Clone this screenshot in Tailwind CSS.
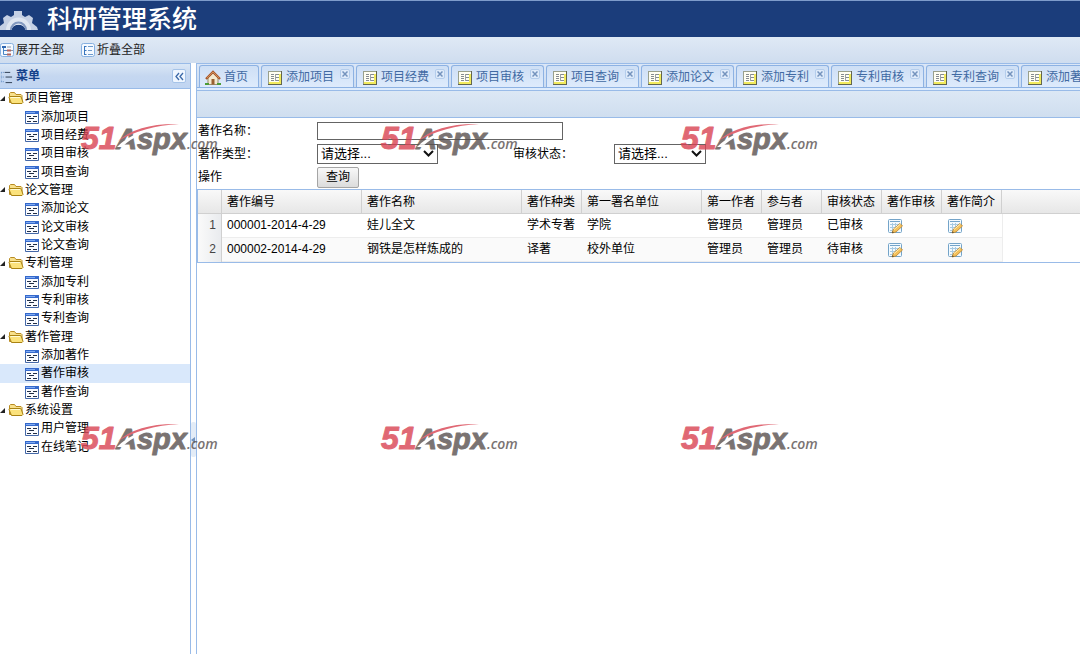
<!DOCTYPE html>
<html lang="zh-CN">
<head>
    <meta charset="UTF-8">
    <meta name="viewport" content="width=device-width, initial-scale=1.0">
    <title>科研管理系统</title>
    <script src="https://cdn.jsdelivr.net/npm/@tailwindcss/browser@4"></script>
</head>
<body class="relative flex h-screen flex-col overflow-hidden bg-white font-['Liberation_Sans','Noto_Sans_CJK_SC',sans-serif] text-[12px] leading-[18px] text-black">
    <!-- Icon sprite -->
    <svg class="hidden">
        <symbol id="i-tree" viewBox="0 0 14 14">
            <rect x=".5" y=".5" width="13" height="13" rx="2" fill="#f4f9ff" stroke="#86b0e0"/>
            <path d="M3.500 5v6.500M3.500 7.500h4M3.500 11.500h4" stroke="#4a86c5" fill="none"/>
            <path d="M2 3h4v2H2z" fill="#2f66b0"/>
            <path d="M7 6.500h4v2H7zM7 10.500h4v2H7z" fill="#b0655f"/>
            <path d="M7 4h4M11 7.500h2" stroke="#8b97a8"/>
        </symbol>
        <symbol id="i-fold" viewBox="0 0 14 14">
            <rect x=".5" y=".5" width="13" height="13" rx="2" fill="#f4f9ff" stroke="#86b0e0"/>
            <path d="M3.500 3v9M3.500 3.500h2M3.500 7.500h2M3.500 11.500h2" stroke="#3b76bd" fill="none"/>
            <path d="M7 3.500h5M7 7.500h4M7 11.500h5" stroke="#6e9bcc"/>
        </symbol>
        <symbol id="i-list" viewBox="0 0 14 14">
            <path d="M1 1.500h3M1 6.500h3M1 11.500h3" stroke="#4f81bd" stroke-dasharray="1 1"/>
            <path d="M1.500 2v10" stroke="#8badd6" stroke-dasharray="1 1"/>
            <path d="M5 1.500h6M6 6.500h7M6 12.500h7" stroke="#26364b"/>
        </symbol>
        <symbol id="i-folder" viewBox="0 0 16 14">
            <path d="M1.500 11.500v-9l1-1h4l1.500 2h5l1 1v7z" fill="#f8e08b" stroke="#b88b22"/>
            <path d="M3.500 12.500L1 6.500q0-1 1-1h10q1 0 1.300.8l1.700 5.200-1 1z" fill="#fbe27c" stroke="#a98212"/>
            <path d="M2.500 6.500h9.500" stroke="#fffbd5"/>
        </symbol>
        <symbol id="i-form" viewBox="0 0 14 13">
            <path d="M.5.5h13v12H.5z" fill="#fbfcff" stroke="#4468a8"/>
            <path d="M0 0h14v3H0z" fill="#3569cc"/>
            <path d="M1 1h9v1H1z" fill="#7faaf2"/>
            <path d="M2 5.500h4M8 5.500h4M4 7.500h5M2 10.500h4M8 10.500h4" stroke="#222f46"/>
        </symbol>
        <symbol id="i-home" viewBox="0 0 16 16">
            <path d="M3 8l5-5 5 5v6.500H3z" fill="#f3ead0" stroke="#9a8b6c"/>
            <path d="M1 9l7-7 7 7" fill="none" stroke="#a85a2d" stroke-width="2.400"/>
            <path d="M2 8l6-6 6 6" fill="none" stroke="#dd9a64" stroke-width=".8"/>
            <path d="M6.500 9h3v5.500h-3z" fill="#9a6031"/>
            <path d="M0 13h4v2H0zM12 13h4v2h-4z" fill="#4c9c36"/>
        </symbol>
        <symbol id="i-tab" viewBox="0 0 14 14">
            <path d="M0 0h14v14H0z" fill="#9aa08c"/>
            <path d="M1 1h12v12H1z" fill="#fffef2"/>
            <path d="M1 11h10V3h2v10H1z" fill="#f1ea5c"/>
            <path d="M3 3.500h3M8 3.500h3M3 5.500h3M3 7.500h3M3 9.500h3M8 6.500h3M8 9.500h3" stroke="#858b91" fill="none"/>
            <path d="M7.500 3v7" stroke="#9ca1a6"/>
            <path d="M0 13.500h14M13.500 0v14" stroke="#62664f"/>
        </symbol>
        <symbol id="i-edit" viewBox="0 0 15 15">
            <rect x=".5" y=".5" width="13" height="13" rx="1" fill="#f3faff" stroke="#74a4c9"/>
            <path d="M2 2.500h10" stroke="#74a4c9"/>
            <path d="M2 5.500h9M2 8.500h7M2 11.500h5M4.500 4v8M7.500 4v6" stroke="#a8cae2" fill="none"/>
            <path d="M4 14l1.500-4L12 4.500l2.500 2.500L8 13z" fill="#f4c15c" stroke="#b7812c" stroke-width=".8"/>
            <path d="M6 10.500l6.500-5.500" stroke="#fff0b8"/>
            <path d="M4 14l.6-1.800L6 13.400z" fill="#4d4532"/>
        </symbol>
    </svg>

    <!-- Banner -->
    <header class="flex h-[37px] shrink-0 items-center gap-[9px] border-t border-[#7e9ccb] bg-[#1b3d7b]">
        <svg class="mt-[2px] h-[23px] w-[38px]" viewBox="0 0 38 23">
            <path d="M0 17l4-3-1-5 4-3 4 2 3-2V2h8v4l3 2 4-2 4 3-1 5 5 4 1 3H26a8 8 0 0 0-15 0H0z" fill="#c5d0e4"/>
            <path d="M6 21a12.500 12.500 0 0 1 25 0h-5a8 8 0 0 0-15 0z" fill="#dfe6f1"/>
            <path d="M11 21a7.500 7.500 0 0 1 15 0" fill="none" stroke="#8298bf" stroke-width="2"/>
        </svg>
        <h1 class="text-[25px] leading-[34px] font-medium text-white">科研管理系统</h1>
    </header>

    <!-- Toolbar -->
    <div class="flex h-[26px] shrink-0 items-center gap-[17px] bg-linear-to-b from-[#dfe9f5] to-[#cfddef] text-[#222]">
        <button class="flex items-center gap-[2px]"><svg class="size-[14px]"><use href="#i-tree"/></svg>展开全部</button>
        <button class="flex items-center gap-[2px]"><svg class="size-[14px]"><use href="#i-fold"/></svg>折叠全部</button>
    </div>

    <div class="flex min-h-0 flex-1">
        <!-- Menu -->
        <aside class="w-[191px] shrink-0 border-t border-r border-[#99bbe8]">
            <div class="flex h-[25px] items-center gap-[3px] border-b border-[#99bbe8] bg-linear-to-b from-[#dae7f6] via-[#c5d7f0] to-[#c0d5f2] pr-1">
                <svg class="mt-[2px] size-[13px]"><use href="#i-list"/></svg>
                <h2 class="flex-1 font-bold text-[#15428b]">菜单</h2>
                <button aria-label="折叠菜单" class="flex size-[14px] items-center justify-center rounded-xs border border-[#a5c3e8] bg-[#eff6ff]">
                    <svg class="size-[9px]" viewBox="0 0 9 9"><path d="M4 1L1 4.500 4 8M8 1L5 4.500 8 8" fill="none" stroke="#3c69a8" stroke-width="1.300"/></svg>
                </button>
            </div>
            <ul id="menu" class="grid h-[367px] auto-rows-fr"></ul>
        </aside>

        <div class="flex w-[5px] shrink-0 flex-col items-center bg-white pt-[359px]">
            <button aria-label="收起" class="flex h-[35px] w-[5px] items-center rounded-xs bg-[#e3ecf7]">
                <svg class="h-[6px] w-[4px]" viewBox="0 0 4 6"><path d="M4 0v6L0 3z" fill="#7292bd"/></svg>
            </button>
        </div>

        <!-- Work area -->
        <main class="flex min-w-0 flex-1 flex-col border-t border-l border-[#99bbe8]">
            <nav class="h-[27px] shrink-0 overflow-hidden border-b border-[#99bbe8] bg-[#deecfd]">
                <div id="tabs" class="flex h-6 items-end gap-[2px] border-b border-[#8db2e3] bg-linear-to-b from-[#dbe7f7] to-[#cbdcf2] pl-[2px]"></div>
            </nav>
            <div class="h-[27px] shrink-0 border-b border-[#99bbe8] bg-linear-to-b from-[#dce8f5] to-[#cfdeef]"></div>

            <form class="grid shrink-0 grid-cols-[119px_196px_101px_1fr] grid-rows-[23px_23px_24px] items-center pt-px pl-px" onsubmit="return false">
                <label for="name">著作名称：</label>
                <input id="name" type="text" class="col-span-3 h-[18px] w-[246px] border border-[#646464] bg-white px-1">
                <label for="kind">著作类型：</label>
                <div class="grid w-[121px] items-center">
                    <select id="kind" class="col-start-1 row-start-1 h-5 appearance-none border border-[#646464] bg-white pl-[3px] text-[13px]"><option>请选择...</option></select>
                    <svg class="pointer-events-none col-start-1 row-start-1 mr-1 h-[7px] w-[11px] justify-self-end" viewBox="0 0 11 7"><path d="M1 1l4.500 4.500L10 1" fill="none" stroke="#111" stroke-width="2"/></svg>
                </div>
                <label for="state">审核状态：</label>
                <div class="grid w-[92px] items-center">
                    <select id="state" class="col-start-1 row-start-1 h-5 appearance-none border border-[#646464] bg-white pl-[3px] text-[13px]"><option>请选择...</option></select>
                    <svg class="pointer-events-none col-start-1 row-start-1 mr-1 h-[7px] w-[11px] justify-self-end" viewBox="0 0 11 7"><path d="M1 1l4.500 4.500L10 1" fill="none" stroke="#111" stroke-width="2"/></svg>
                </div>
                <span>操作</span>
                <button class="h-[21px] w-[42px] rounded-xs border border-[#a5a5a5] bg-linear-to-b from-[#f8f8f8] to-[#dcdcdc]">查询</button>
            </form>

            <!-- Grid -->
            <div class="shrink-0 border-y border-l border-[#99bbe8]">
                <table class="w-full table-fixed border-separate border-spacing-0 text-left">
                    <colgroup>
                        <col class="w-[24px]"><col class="w-[140px]"><col class="w-[160px]"><col class="w-[60px]"><col class="w-[120px]">
                        <col class="w-[60px]"><col class="w-[60px]"><col class="w-[60px]"><col class="w-[60px]"><col class="w-[60px]"><col>
                    </colgroup>
                    <thead id="head" class="bg-linear-to-b from-[#f9f9f9] to-[#e6e6e6]"></thead>
                    <tbody id="rows"></tbody>
                </table>
            </div>
        </main>
    </div>

    <!-- Watermarks laid over the page -->
    <div id="marks" class="pointer-events-none absolute top-[118px] left-[80px] grid grid-cols-[300px_300px_300px] grid-rows-[300px_40px]"></div>

    <script>
        const menu = [
            ['项目管理', ['添加项目', '项目经费', '项目审核', '项目查询']],
            ['论文管理', ['添加论文', '论文审核', '论文查询']],
            ['专利管理', ['添加专利', '专利审核', '专利查询']],
            ['著作管理', ['添加著作', '著作审核', '著作查询']],
            ['系统设置', ['用户管理', '在线笔记']]
        ];
        const tabs = ['添加项目', '项目经费', '项目审核', '项目查询', '添加论文', '添加专利', '专利审核', '专利查询', '添加著作'];
        const columns = ['', '著作编号', '著作名称', '著作种类', '第一署名单位', '第一作者', '参与者', '审核状态', '著作审核', '著作简介'];
        const rows = [
            ['000001-2014-4-29', '娃儿全文', '学术专著', '学院', '管理员', '管理员', '已审核'],
            ['000002-2014-4-29', '钢铁是怎样炼成的', '译著', '校外单位', '管理员', '管理员', '待审核']
        ];

        document.getElementById('menu').innerHTML = menu.map(([group, items]) => `
            <li class="flex items-center">
                <svg class="mr-[3px] h-[5px] w-[5px]" viewBox="0 0 5 5"><path d="M5 0v5H0z" fill="#222"/></svg>
                <svg class="mr-px h-[14px] w-4"><use href="#i-folder"/></svg>${group}
            </li>
            ${items.map(item => `
            <li class="flex items-center pl-[25px] ${item === '著作审核' ? 'bg-[#d9e8fb]' : ''}">
                <a href="#" class="flex items-center gap-[2px]"><svg class="mt-[2px] h-[13px] w-[14px]"><use href="#i-form"/></svg>${item}</a>
            </li>`).join('')}`).join('');

        document.getElementById('tabs').innerHTML = `
            <a href="#" class="flex h-[22px] w-[60px] shrink-0 items-center gap-[3px] rounded-t-[3px] border border-b-0 border-[#8db2e3] bg-linear-to-b from-[#cedff5] to-[#deebfc] pl-[5px] text-[#416aa3]">
                <svg class="mt-[2px] size-4"><use href="#i-home"/></svg>首页
            </a>` + tabs.map(tab => `
            <div class="flex h-[22px] w-[93px] shrink-0 items-center rounded-t-[3px] border border-b-0 border-[#8db2e3] bg-linear-to-b from-[#cedff5] to-[#deebfc] pl-[6px] text-[#416aa3]">
                <a href="#" class="flex items-center gap-1"><svg class="mt-[3px] size-[14px]"><use href="#i-tab"/></svg>${tab}</a>
                <button aria-label="关闭" class="mb-[6px] ml-[6px] flex size-[10px] items-center justify-center rounded-xs border border-[#b4cdec] bg-[#dfebfa]">
                    <svg class="size-[6px]" viewBox="0 0 6 6"><path d="M.5.5l5 5M5.500.5l-5 5" stroke="#7493bd" stroke-width="1.500"/></svg>
                </button>
            </div>`).join('');

        document.getElementById('head').innerHTML = `<tr>${columns.map(c => `
            <th class="h-6 border-r border-b border-[#d0d0d0] p-0 pl-[5px] font-normal whitespace-nowrap">${c}</th>`).join('')}
            <th class="border-b border-[#d0d0d0] p-0"></th></tr>`;

        const editCell = '<td class="border-b border-[#ededed] p-0 pl-[6px]"><button aria-label="编辑" class="mt-[2px] block"><svg class="size-[15px]"><use href="#i-edit"/></svg></button></td>';
        document.getElementById('rows').innerHTML = rows.map((row, i) => `
            <tr class="${i ? 'bg-[#fafafa]' : ''}">
                <td class="h-6 border-r border-[#d0d0d0] bg-linear-to-r from-[#fafafa] to-[#e9ebee] p-0 pr-[5px] pb-[2px] text-right text-[#444]">${i + 1}</td>
                ${row.map(cell => `<td class="border-b border-[#ededed] p-0 pb-[2px] pl-[5px] whitespace-nowrap">${cell}</td>`).join('')}
                ${editCell}${editCell}
                <td class="border-l border-[#ededed] bg-white p-0"></td>
            </tr>`).join('');

        document.getElementById('marks').innerHTML = Array(6).fill(`
            <svg class="h-[40px] w-[142px] opacity-80" viewBox="0 0 142 40" font-family="Liberation Sans, sans-serif" font-weight="700" font-style="italic" stroke-linejoin="round">
                <text x="1" y="31" font-size="32" fill="#d94352" stroke="#d94352">51</text>
                <text x="36" y="31" font-size="29" fill="#59514f" stroke="#59514f">Aspx</text>
                <text x="107" y="31" font-size="14" font-family="Open Sans, sans-serif" font-weight="600" fill="#59514f">.com</text>
                <path d="M37 29Q54 11 95 6 58 13 42 29z" fill="#fff"/>
                <path d="M38 23Q58 5 99 6 64 8 38 23z" fill="#d94352"/>
            </svg>`).join('');
    </script>
</body>
</html>
